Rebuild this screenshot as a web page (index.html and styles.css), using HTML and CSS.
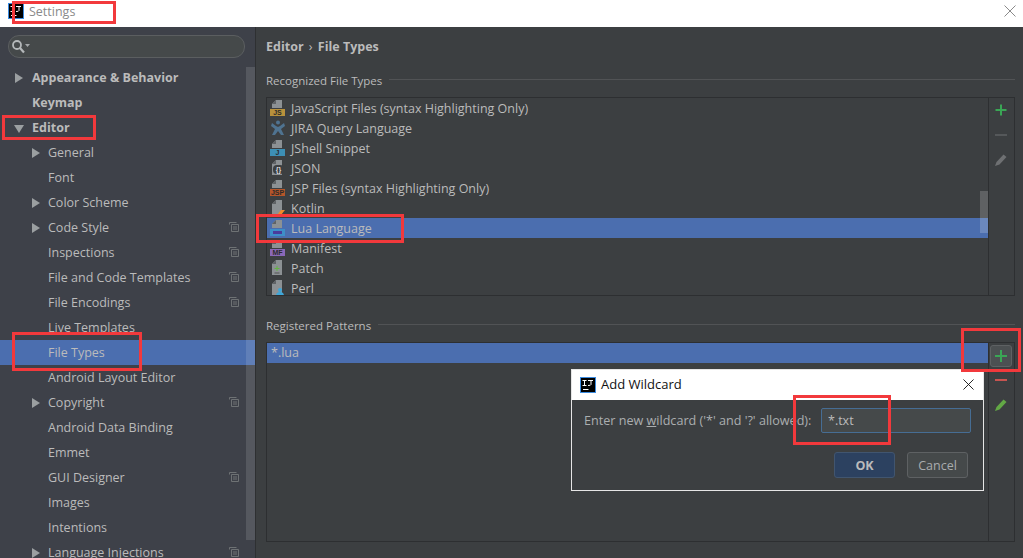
FILE: index.html
```html
<!doctype html>
<html>
  <head>
    <meta charset="utf-8">
    <title>Settings</title>
    <link rel="stylesheet" href="styles.css">
  </head>
  <body>
    <svg class="defs" width="0" height="0">
      <symbol id="page" viewBox="0 0 16 16">
        <path d="M6 0h6v8H2V4z" fill="#8c9194"/>
        <path d="M6 0v4H2z" fill="#5f6366"/>
      </symbol>
      <symbol id="tallpage" viewBox="0 0 16 16">
        <path d="M6 0h6v15H2V4z" fill="#8c9194"/>
        <path d="M6 0v4H2z" fill="#5f6366"/>
      </symbol>
      <symbol id="shared" viewBox="0 0 10 10">
        <path d="M.5 2.500V.5h7M2.500 2.500h7v7h-7zM4 5h4M4 7h4" fill="none" stroke="#6e7274"/>
      </symbol>
      <symbol id="ij" viewBox="0 0 16 16">
        <rect x=".5" y=".5" width="15" height="15" fill="#000" stroke="#3b8be0"/>
        <path d="M2.500 3.500h4M4.500 3.500v5M2.500 8.500h4M8 3.500h5M11 3.500V7.500q0 1-3 1M3 12.500h5.500" stroke="#fff" fill="none"/>
      </symbol>
    </svg>

    <div class="titlebar">
      <svg class="title-icon"><use href="#ij"/></svg>
      <span class="title-text">Settings</span>
      <svg class="close" viewBox="0 0 12 12"><path d="M.5.5l11 11M11.500.5l-11 11" stroke="#8a8a8a" fill="none"/></svg>
    </div>

    <div class="window">
      <aside class="sidebar">
        <div class="search">
          <svg viewBox="0 0 20 15" width="20" height="15"><circle cx="6" cy="6" r="4" fill="none" stroke="#b4b8ba" stroke-width="1.800"/><path d="M9 9l4 4.500" stroke="#b4b8ba" stroke-width="2.200"/><path d="M14 5h5l-2.500 3z" fill="#a3a7a9"/></svg>
        </div>
        <ul class="tree">
          <li class="row top closed">Appearance &amp; Behavior</li>
          <li class="row top">Keymap</li>
          <li class="row top open">Editor</li>
          <li class="row closed">General</li>
          <li class="row">Font</li>
          <li class="row closed">Color Scheme</li>
          <li class="row closed">Code Style<svg class="shared"><use href="#shared"/></svg></li>
          <li class="row">Inspections<svg class="shared"><use href="#shared"/></svg></li>
          <li class="row">File and Code Templates<svg class="shared"><use href="#shared"/></svg></li>
          <li class="row">File Encodings<svg class="shared"><use href="#shared"/></svg></li>
          <li class="row">Live Templates</li>
          <li class="row selected">File Types</li>
          <li class="row">Android Layout Editor</li>
          <li class="row closed">Copyright<svg class="shared"><use href="#shared"/></svg></li>
          <li class="row">Android Data Binding</li>
          <li class="row">Emmet</li>
          <li class="row">GUI Designer<svg class="shared"><use href="#shared"/></svg></li>
          <li class="row">Images</li>
          <li class="row">Intentions</li>
          <li class="row closed">Language Injections<svg class="shared"><use href="#shared"/></svg></li>
        </ul>
        <div class="side-scroll"></div>
      </aside>

      <main class="content">
        <div class="crumbs">Editor <span class="crumb-sep">›</span> File Types</div>

        <div class="group-title"><span>Recognized File Types</span></div>
        <div class="panel types">
          <ul class="list">
            <li class="item"><span class="ficon"><svg><use href="#page"/></svg><b class="badge js">JS</b></span>JavaScript Files (syntax Highlighting Only)</li>
            <li class="item"><span class="ficon"><svg viewBox="0 0 16 16"><circle cx="8" cy="2.500" r="2" fill="#4f7390"/><path d="M2 3l4 3 2 1 2-1 4-3 1 3-4 3 3 6h-3l-3-4-3 4H2l3-6-4-3z" fill="#4f7390"/></svg></span>JIRA Query Language</li>
            <li class="item"><span class="ficon"><svg><use href="#page"/></svg><b class="badge jshell">J</b></span>JShell Snippet</li>
            <li class="item"><span class="ficon"><svg><use href="#tallpage"/></svg><b class="badge json">{}</b></span>JSON</li>
            <li class="item"><span class="ficon"><svg><use href="#page"/></svg><b class="badge jsp">JSP</b></span>JSP Files (syntax Highlighting Only)</li>
            <li class="item"><span class="ficon"><svg viewBox="0 0 16 16"><path d="M6 0h6v14H2V4z" fill="#8c9194"/><path d="M6 0v4H2z" fill="#5f6366"/><path d="M7 15l4-5h4l-4 5z" fill="#ef8a2a"/></svg></span>Kotlin</li>
            <li class="item selected"><span class="ficon"><svg><use href="#page"/></svg><b class="badge lua"><i class="lua-mark"></i></b></span>Lua Language</li>
            <li class="item"><span class="ficon"><svg><use href="#page"/></svg><b class="badge mf">MF</b></span>Manifest</li>
            <li class="item"><span class="ficon"><svg viewBox="0 0 16 16"><use href="#tallpage"/><path d="M7 6v5M4.500 8.500h5" stroke="#62b543" fill="none"/><path d="M4.500 13h5" stroke="#555" fill="none"/></svg></span>Patch</li>
            <li class="item"><span class="ficon"><svg viewBox="0 0 16 16"><use href="#tallpage"/><circle cx="10" cy="10" r="2" fill="#3ea6d8"/><path d="M6 16q0-4 4-4t4 4z" fill="#3ea6d8"/></svg></span>Perl</li>
          </ul>
          <div class="types-scroll"></div>
          <div class="toolbar">
            <svg class="tool" viewBox="0 0 14 14"><path d="M7 1.500v11M1.500 7h11" stroke="#3aa655" stroke-width="2" fill="none"/></svg>
            <svg class="tool" viewBox="0 0 14 14"><path d="M1 7h12" stroke="#55585a" stroke-width="2" fill="none"/></svg>
            <svg class="tool" viewBox="0 0 14 14"><path d="M1 13l1.500-4 7-7.500 3 2.500-7 7.500z" fill="#6e7072"/></svg>
          </div>
        </div>

        <div class="group-title"><span>Registered Patterns</span></div>
        <div class="panel patterns">
          <ul class="list">
            <li class="item selected plain">*.lua</li>
          </ul>
          <div class="toolbar patterns-bar">
            <div class="tool-btn"><svg viewBox="0 0 14 14"><path d="M7 1v12M1 7h12" stroke="#3aa655" stroke-width="2" fill="none"/></svg></div>
            <svg class="tool" viewBox="0 0 14 14"><path d="M1 7h12" stroke="#c75450" stroke-width="2" fill="none"/></svg>
            <svg class="tool" viewBox="0 0 14 14"><path d="M1 13l1.500-4 7-7.500 3 2.500-7 7.500z" fill="#62a845"/></svg>
          </div>
        </div>
      </main>
    </div>

    <div class="dialog">
      <div class="dialog-title">
        <svg class="title-icon"><use href="#ij"/></svg>
        <span>Add Wildcard</span>
        <svg class="dialog-close" viewBox="0 0 12 12"><path d="M.5.5l11 11M11.500.5l-11 11" stroke="#111" fill="none"/></svg>
      </div>
      <div class="dialog-body">
        <div class="field">
          <label>Enter new <u>w</u>ildcard ('*' and '?' allowed):</label>
          <div class="input">*.txt</div>
        </div>
        <div class="buttons">
          <button class="ok">OK</button>
          <button>Cancel</button>
        </div>
      </div>
    </div>

    <div class="mark mark-settings"></div>
    <div class="mark mark-editor"></div>
    <div class="mark mark-filetypes"></div>
    <div class="mark mark-lua"></div>
    <div class="mark mark-plus"></div>
    <div class="mark mark-txt"></div>
  </body>
</html>
```

FILE: styles.css
```css
html,
body {
  margin: 0;
  height: 558px;
  overflow: hidden;
}

body {
  font-family: "Open Sans", "Noto Sans", sans-serif;
  font-size: 12.5px;
  color: #bbbbbb;
  background-color: #3c3f41;
  position: relative;
}

ul {
  list-style: none;
  margin: 0;
  padding: 0;
}

.defs {
  position: absolute;
}

.titlebar {
  height: 27px;
  background-color: #fff;
  display: flex;
  align-items: center;
  padding: 0 9px 5px 8px;
  box-sizing: border-box;
}

.title-icon {
  width: 16px;
  height: 16px;
  flex: none;
}

.title-text {
  margin-left: 5px;
  color: #8a8a8a;
}

.close {
  width: 12px;
  height: 12px;
  margin-left: auto;
  margin-right: -2px;
}

.window {
  display: flex;
  height: 531px;
}

.sidebar {
  width: 255px;
  flex: none;
  background-color: #3e4149;
  border-right: 1px solid #2e3032;
  position: relative;
  overflow: hidden;
}

.search {
  height: 21px;
  margin: 8px 10px 0 8px;
  border: 1px solid #5b5e60;
  border-radius: 11px;
  background-color: #45494a;
  display: flex;
  align-items: center;
  padding-left: 2px;
}

.tree {
  margin-top: 7px;
}

.row {
  height: 25px;
  line-height: 25px;
  padding-left: 48px;
  position: relative;
  white-space: nowrap;
}

.row.top {
  padding-left: 32px;
  font-weight: 700;
}

.row.closed::before {
  content: "";
  position: absolute;
  left: 32px;
  top: 8px;
  border-left: 8px solid #9b9fa1;
  border-top: 5px solid transparent;
  border-bottom: 5px solid transparent;
}

.row.top.closed::before {
  left: 15px;
}

.row.open::before {
  content: "";
  position: absolute;
  left: 14px;
  top: 10px;
  border-top: 8px solid #9b9fa1;
  border-left: 5px solid transparent;
  border-right: 5px solid transparent;
}

.row.selected {
  background-color: #4b6eaf;
}

.shared {
  position: absolute;
  left: 229px;
  top: 7px;
  width: 10px;
  height: 10px;
}

.side-scroll {
  position: absolute;
  right: 0;
  top: 40px;
  width: 9px;
  height: 473px;
  background-color: rgba(255, 255, 255, 0.12);
}

.content {
  flex: 1;
  padding: 10px 8px 0 10px;
  min-width: 0;
}

.crumbs {
  font-weight: 700;
  line-height: 20px;
  margin-bottom: 16px;
}

.crumb-sep {
  font-weight: 400;
  margin: 0 2px;
}

.group-title {
  display: flex;
  align-items: center;
  gap: 7px;
  font-size: 11.5px;
  line-height: 16px;
  margin-bottom: 8px;
}

.group-title::after {
  content: "";
  flex: 1;
  height: 1px;
  margin-top: -3px;
  background-color: #515355;
}

.panel {
  border: 1px solid #2d2f31;
  display: flex;
  position: relative;
}

.types {
  height: 197px;
  margin-bottom: 22px;
  overflow: hidden;
}

.patterns {
  height: 198px;
}

.list {
  flex: 1;
  min-width: 0;
}

.item {
  height: 20px;
  line-height: 22px;
  display: flex;
  align-items: flex-start;
  white-space: nowrap;
  padding-left: 3px;
}

.item.plain {
  padding-left: 4px;
  line-height: 20px;
}

.item.selected {
  background-color: #4b6eaf;
}

.ficon {
  width: 16px;
  height: 16px;
  margin: 2px 5px 0 0;
  position: relative;
  flex: none;
}

.ficon svg {
  width: 16px;
  height: 16px;
  display: block;
}

.badge {
  position: absolute;
  left: 0;
  bottom: 0;
  width: 15px;
  height: 7px;
  font-family: "Liberation Sans", sans-serif;
  font-size: 7px;
  line-height: 7px;
  text-align: center;
  color: #2b2b2b;
}

.js {
  background-color: #b8913c;
}

.jshell {
  background-color: #3d8fb5;
}

.json {
  background-color: #3c3f41;
  border-radius: 4px;
  color: #ddd;
  left: 3px;
  bottom: 2px;
  width: 11px;
  height: 9px;
  line-height: 9px;
}

.jsp {
  background-color: #b5562a;
}

.lua {
  background-color: #3d8fc9;
}

.lua-mark {
  display: block;
  margin: 2px auto 0;
  width: 9px;
  height: 3px;
  background-color: #4a3c9c;
}

.mf {
  background-color: #8a68b8;
}

.types-scroll {
  position: absolute;
  right: 26px;
  top: 93px;
  width: 8px;
  height: 42px;
  background-color: rgba(255, 255, 255, 0.18);
}

.toolbar {
  width: 24px;
  flex: none;
  border-left: 1px solid #2d2f31;
  display: flex;
  flex-direction: column;
  align-items: center;
  gap: 11px;
  padding: 5px 1px 0 0;
  background-color: #3c3f41;
  position: relative;
}

.tool {
  width: 14px;
  height: 14px;
}

.patterns-bar {
  padding-top: 2px;
  gap: 11px;
}

.patterns-bar .tool-btn {
  margin-bottom: -5px;
}

.tool-btn {
  width: 22px;
  height: 22px;
  box-sizing: border-box;
  border: 1px solid #5e6163;
  border-radius: 3px;
  background-color: #4c5052;
  display: flex;
  align-items: center;
  justify-content: center;
}

.tool-btn svg {
  width: 14px;
  height: 14px;
}

.dialog {
  position: absolute;
  left: 571px;
  top: 369px;
  width: 413px;
  height: 122px;
  box-sizing: border-box;
  border: 1px solid #e6e6e6;
  background-color: #3c3f41;
}

.dialog-title {
  height: 30px;
  background-color: #fff;
  color: #111;
  display: flex;
  align-items: center;
  padding: 0 9px 0 8px;
}

.dialog-title span {
  margin: -2px 0 0 5px;
  font-size: 13px;
}

.dialog-close {
  width: 11px;
  height: 11px;
  margin-left: auto;
  margin-top: -1px;
}

.dialog-body {
  padding: 8px 12px 0;
}

.field {
  display: flex;
  align-items: center;
  justify-content: space-between;
}

.field label {
  font-size: 12.6px;
  color: #abaeb0;
}

.input {
  width: 150px;
  height: 25px;
  box-sizing: border-box;
  border: 1px solid #466d94;
  border-radius: 2px;
  background-color: #45494a;
  line-height: 23px;
  padding-left: 6px;
}

.buttons {
  display: flex;
  justify-content: flex-end;
  gap: 12px;
  margin-top: 19px;
  padding-right: 3px;
}

button {
  width: 61px;
  height: 26px;
  font: inherit;
  color: #a9acae;
  background-color: #45494a;
  border: 1px solid #5e6163;
  border-radius: 3px;
  padding: 0;
}

button.ok {
  font-weight: 700;
  color: #bbb;
  background-color: #2c4160;
  border-color: #41556f;
}

.mark {
  position: absolute;
  box-sizing: border-box;
  border: 3px solid #f2393c;
}

.mark-settings {
  left: 12px;
  top: 1px;
  width: 104px;
  height: 23px;
}

.mark-editor {
  left: 2px;
  top: 115px;
  width: 94px;
  height: 25px;
}

.mark-filetypes {
  left: 12px;
  top: 332px;
  width: 130px;
  height: 39px;
}

.mark-lua {
  left: 256px;
  top: 214px;
  width: 148px;
  height: 29px;
}

.mark-plus {
  left: 961px;
  top: 328px;
  width: 60px;
  height: 44px;
}

.mark-txt {
  left: 793px;
  top: 395px;
  width: 98px;
  height: 50px;
}
```
